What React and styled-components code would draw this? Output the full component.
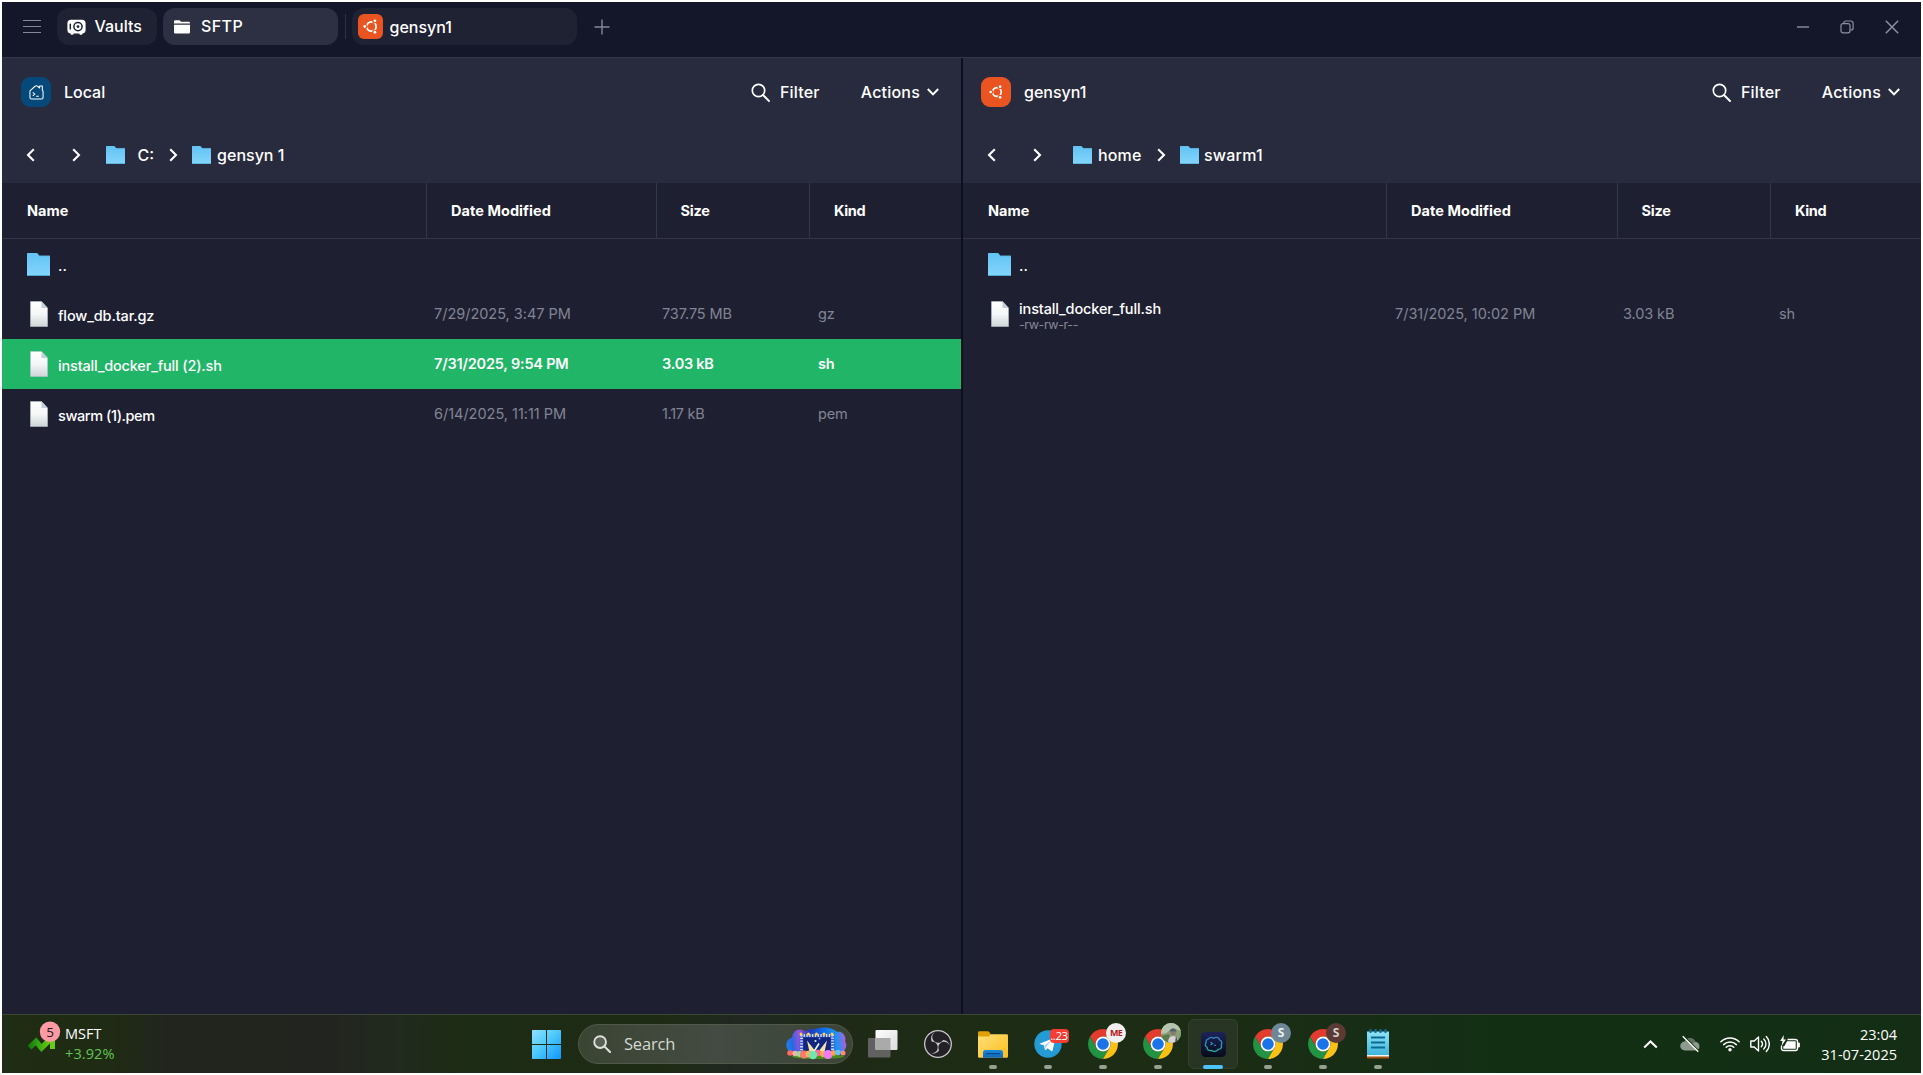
import React from "react";
import styled, { createGlobalStyle } from "styled-components";
import { SiObsstudio } from "react-icons/si";

const GlobalStyle = createGlobalStyle`
  *, *::before, *::after { box-sizing: border-box; }
  body { margin: 0; background: #fff; overflow: hidden; }
  svg { display: block; flex: none; }
`;

/* ---------- shell ---------- */

const Screen = styled.div`
  display: grid;
  grid-template-rows: 56px 956px 59px;
  width: 1919px;
  height: 1071px;
  margin: 2px;
  overflow: hidden;
  color: #fff;
  font-family: "Inter", "Liberation Sans", sans-serif;
  font-size: 16px;
  font-weight: 500;
  white-space: nowrap;
`;

const Label = styled.span`
  font-size: ${(p) => p.$size || 16}px;
  letter-spacing: ${(p) => p.$ls || 0}px;
  line-height: 20px;
  margin-top: ${(p) => p.$down || 0}px;
`;

/* ---------- title bar ---------- */

const TitleBar = styled.header`
  display: flex;
  align-items: flex-start;
  padding: 6px 22px 0 21px;
  background: #141729;
  border-bottom: 1px solid #34374a;
`;

const TitleIcon = styled.div`
  display: flex;
  align-items: center;
  height: 37px;
  margin-left: ${(p) => p.$left || 0}px;
`;

const Tab = styled.div`
  display: flex;
  align-items: center;
  width: ${(p) => p.$width}px;
  height: 37px;
  margin-left: ${(p) => p.$left}px;
  padding-left: ${(p) => p.$pad}px;
  gap: ${(p) => p.$gap}px;
  border-radius: 12px;
  background: ${(p) => (p.$active ? "#2d3042" : "#1f2233")};
`;

const TabRule = styled.div`
  width: 1px;
  height: 25px;
  margin: 6px 0 0 7px;
  background: #2f3245;
`;

const WindowControls = styled.div`
  display: flex;
  align-items: center;
  gap: 31px;
  height: 37px;
  margin-left: auto;
`;

/* ---------- panes ---------- */

const Panes = styled.main`
  display: grid;
  grid-template-columns: 959px 2px 958px;
  background: #1e2032;
`;

const Divider = styled.div`
  background: #0c0f22;
`;

const Pane = styled.section`
  display: flex;
  flex-direction: column;
`;

const PaneHead = styled.div`
  height: 125px;
  background: #282b3d;
`;

const HostRow = styled.div`
  display: flex;
  align-items: center;
  height: 68px;
  padding: 0 ${(p) => p.$right}px 0 ${(p) => p.$left}px;
`;

const HostBadge = styled.div`
  display: flex;
  align-items: center;
  justify-content: center;
  width: ${(p) => p.$w || 30}px;
  height: ${(p) => p.$h || 30}px;
  border-radius: ${(p) => p.$r || 9}px;
  background: ${(p) => p.$color};
`;

const HostName = styled(Label)`
  margin-left: 13px;
`;

const HostActions = styled.div`
  display: flex;
  align-items: center;
  margin-left: auto;
`;

const FilterButton = styled.div`
  display: flex;
  align-items: center;
  gap: 10px;
  margin-right: 41px;
`;

const ActionsButton = styled.div`
  display: flex;
  align-items: center;
  gap: 7px;
`;

const PathRow = styled.div`
  display: flex;
  align-items: center;
  height: 57px;
  padding-left: 24px;
`;

const PathGap = styled.div`
  width: ${(p) => p.$w}px;
  flex: none;
`;

const columns = {
  left: "425px 230px 153px 1fr",
  right: "424px 231px 153px 1fr",
};

const HeaderRow = styled.div`
  display: grid;
  grid-template-columns: ${(p) => columns[p.$side]};
  height: 56px;
  border-bottom: 1px solid #34374a;
`;

const HeaderCell = styled.div`
  display: flex;
  align-items: center;
  padding: 0 0 1px ${(p) => p.$pad || 24}px;
  border-right: ${(p) => (p.$last ? "none" : "1px solid #34374a")};
  font-size: 14.5px;
  font-weight: 700;
  letter-spacing: ${(p) => p.$ls || 0}px;
`;

const FileRow = styled.div`
  display: grid;
  grid-template-columns: 431px 228px 156px 1fr;
  height: 50px;
  background: ${(p) => (p.$selected ? "#21b568" : "transparent")};
`;

const NameCell = styled.div`
  display: flex;
  align-items: center;
  padding-left: 25px;
`;

const IconSlot = styled.div`
  display: flex;
  justify-content: ${(p) => (p.$file ? "center" : "flex-start")};
  width: 23px;
  margin-right: 8px;
`;

const NameStack = styled.div`
  display: flex;
  flex-direction: column;
  padding-top: 3px;
  font-size: 14.5px;
  line-height: ${(p) => (p.$mode ? 17 : 20)}px;
  letter-spacing: ${(p) => p.$ls || 0}px;
`;

const Mode = styled.span`
  font-size: 12.5px;
  font-weight: 400;
  line-height: 15px;
  letter-spacing: -0.4px;
  color: #868896;
`;

const DataCell = styled.div`
  display: flex;
  align-items: center;
  padding-left: 1px;
  padding-bottom: 1px;
  font-size: 14.5px;
  font-weight: ${(p) => (p.$selected ? 600 : 400)};
  letter-spacing: ${(p) => p.$ls || 0}px;
  color: ${(p) => (p.$selected ? "#fff" : "#828492")};
`;

/* ---------- taskbar ---------- */

const Taskbar = styled.footer`
  display: flex;
  border-top: 1px solid #3c4635;
  background: linear-gradient(
    90deg,
    #1f2d13 0px, #1f2b14 110px, #22251d 165px, #22251f 330px,
    #202a1d 400px, #1d2c15 460px, #1e2b14 660px, #202820 740px, #1e2a16 850px,
    #1d2c15 1000px, #1b2c15 1250px, #152e15 1420px, #122f14 1500px, #132e14 1919px
  );
  font-family: "Open Sans", "Noto Sans", sans-serif;
  font-weight: 400;
`;

const StockWidget = styled.div`
  display: flex;
  width: 516.5px;
  padding: 6px 0 0 26px;
`;

const StockIcon = styled.div`
  width: 37px;
  height: 34px;
`;

const StockText = styled.div`
  display: flex;
  flex-direction: column;
  padding-top: 3px;
  font-size: 14.5px;
  line-height: 20px;
`;

const StockChange = styled.span`
  color: #62c552;
  letter-spacing: 0.1px;
`;

const StartCell = styled.div`
  display: flex;
  justify-content: center;
  width: 55px;
  padding-top: 15px;
`;

const SearchBox = styled.div`
  display: flex;
  align-items: center;
  width: 275px;
  height: 40px;
  margin: 9px 0 0 4.5px;
  padding: 0 5px 0 14px;
  border: 1px solid #515a49;
  border-radius: 20px;
  background: linear-gradient(90deg, #3b4533, #434b42 50%, #3b4535);
  color: #d5d9d0;
`;

const SearchText = styled.span`
  margin-left: 13px;
  font-size: 16.5px;
  line-height: 20px;
  letter-spacing: -0.2px;
`;

const SearchArt = styled.div`
  margin-left: auto;
`;

const AppStrip = styled.div`
  display: flex;
  margin-left: 2.5px;
`;

const AppCell = styled.div`
  position: relative;
  display: flex;
  justify-content: center;
  align-items: flex-start;
  width: 55px;
  height: 58px;
  padding-top: ${(p) => p.$top || 14}px;

  &::after {
    content: "";
    position: absolute;
    left: 50%;
    bottom: 4px;
    width: ${(p) => (p.$active ? 20 : 8)}px;
    height: 4px;
    border-radius: 2px;
    transform: translateX(-50%);
    background: ${(p) => (p.$active ? "#4cc2ff" : p.$open ? "#979e92" : "transparent")};
  }
`;

const ActiveTile = styled.div`
  display: flex;
  justify-content: center;
  align-items: center;
  width: 50px;
  height: 50px;
  border: 1px solid #343f2e;
  border-radius: 6px;
  background: #293524;
`;

const Profile = styled.div`
  position: absolute;
  left: 30.5px;
  top: 8px;
  display: flex;
  align-items: center;
  justify-content: center;
  width: 20px;
  height: 20px;
  overflow: hidden;
  border-radius: 50%;
  background: ${(p) => p.$bg};
  color: ${(p) => p.$fg || "#eee"};
  font-size: ${(p) => p.$fs || 12}px;
  letter-spacing: ${(p) => p.$ls || 0}px;
  font-weight: 700;
  line-height: 20px;
`;

const CountBadge = styled.div`
  position: absolute;
  left: 29px;
  top: 14px;
  width: 19px;
  height: 14px;
  border-radius: 4px;
  background: #f23c34;
  color: #fff;
  font-size: 11.5px;
  line-height: 13px;
  letter-spacing: -0.4px;
  text-align: center;
`;

const ObsDisc = styled.div`
  display: flex;
  width: 28px;
  height: 28px;
  border-radius: 50%;
  background: #242126;
  color: #c9c7c9;
`;

const Tray = styled.div`
  display: flex;
  align-items: center;
  margin-left: auto;
  padding-right: 24px;
`;

const Clock = styled.div`
  width: 94px;
  margin-top: 1px;
  text-align: right;
  font-size: 14.5px;
  line-height: 20px;
`;

/* ---------- icons ---------- */

const Burger = () => (
  <svg width="18" height="15" viewBox="0 0 18 15">
    <path d="M0 1.500h18M0 7.500h18M0 13.500h18" stroke="#858899" strokeWidth="1.200" />
  </svg>
);

const VaultIcon = () => (
  <svg width="19" height="16" viewBox="0 0 19 16">
    <path d="M4 0.7h11a3.6 3.6 0 0 1 3.6 3.6v6.6a3.6 3.6 0 0 1-3 3.5l-.6 1.3h-2.2l-.5-1.2H6.7l-.5 1.2H4l-.6-1.3a3.6 3.6 0 0 1-3-3.5V4.3A3.6 3.6 0 0 1 4 .7z" fill="#fff" />
    <circle cx="11" cy="7.6" r="4.1" fill="none" stroke="#1f2233" strokeWidth="1.5" />
    <circle cx="11" cy="7.6" r="1.4" fill="#1f2233" />
    <path d="M3.3 4.7v5.8" stroke="#1f2233" strokeWidth="1.5" />
  </svg>
);

const TabFolder = () => (
  <svg width="16" height="14" viewBox="0 0 16 14">
    <path d="M0 1.3A1.2 1.2 0 0 1 1.2.2h4.3l1.6 1.6h7.7A1.2 1.2 0 0 1 16 3v.6H0z" fill="#fff" />
    <path d="M0 4.7h16v7.6a1.2 1.2 0 0 1-1.2 1.2H1.2A1.2 1.2 0 0 1 0 12.300z" fill="#fff" />
  </svg>
);

const Ubuntu = ({ size = 14 }) => (
  <svg width={size} height={size} viewBox="0 0 16 16">
    <circle cx="9" cy="8" r="5" fill="none" stroke="#fff" strokeWidth="1.900" />
    <circle cx="2.800" cy="8" r="2.300" fill="#e95420" />
    <circle cx="12.200" cy="2.600" r="2.200" fill="#e95420" />
    <circle cx="12.200" cy="13.400" r="2.200" fill="#e95420" />
    <circle cx="1.900" cy="8" r="1.500" fill="#fff" />
    <circle cx="12.700" cy="1.900" r="1.500" fill="#fff" />
    <circle cx="12.700" cy="14.100" r="1.500" fill="#fff" />
  </svg>
);

const PlusIcon = () => (
  <svg width="16" height="16" viewBox="0 0 16 16">
    <path d="M8 0.500v15M0.500 8h15" stroke="#858899" strokeWidth="1.4" />
  </svg>
);

const MinimizeIcon = () => (
  <svg width="12" height="12" viewBox="0 0 12 12">
    <path d="M0 6h12" stroke="#8d90a0" strokeWidth="1.4" />
  </svg>
);

const RestoreIcon = () => (
  <svg width="14" height="14" viewBox="0 0 14 14" fill="none" stroke="#8d90a0" strokeWidth="1.200">
    <rect x="1" y="3.600" width="9" height="9.200" rx="2" />
    <path d="M3.800 3.400V3a2 2 0 0 1 2-2H10.500a2.600 2.600 0 0 1 2.600 2.600V8a2 2 0 0 1-2 2h-.8" />
  </svg>
);

const CloseIcon = () => (
  <svg width="14" height="14" viewBox="0 0 14 14">
    <path d="M0.800 0.800l12.400 12.400M13.200 0.800L0.800 13.200" stroke="#8d90a0" strokeWidth="1.500" />
  </svg>
);

const HomeTerminal = () => (
  <svg width="15" height="15" viewBox="0 0 16 16" fill="none" stroke="#fff" strokeWidth="1.100" strokeLinejoin="round">
    <path d="M1 6.300L6.200 1.600a2.400 2.400 0 0 1 3.300 0l1.800 1.600V1h2.900v4.700l.8.800v6.800a1.700 1.700 0 0 1-1.700 1.700H2.700A1.700 1.700 0 0 1 1 13.300z" />
    <path d="M4 7.800l2.200 1.900L4 11.600M7.600 12h2.800" />
  </svg>
);

const SearchIcon = ({ size = 19, width = 1.700, color = "#fff", fill = "none" }) => (
  <svg width={size} height={size} viewBox="0 0 19 19">
    <circle cx="7.500" cy="7.500" r="6.200" fill={fill} stroke={color} strokeWidth={width} />
    <path d="M12 12l6 6" stroke={color} strokeWidth={width + 0.2} strokeLinecap="round" />
  </svg>
);

const ChevronDown = () => (
  <svg width="12" height="8" viewBox="0 0 12 8">
    <path d="M0.800 1l5.200 5.400L11.200 1" fill="none" stroke="#fff" strokeWidth="2" />
  </svg>
);

const Chevron = ({ left }) => (
  <svg width="9" height="14" viewBox="0 0 9 14">
    <path d={left ? "M7.800 1.200L2 7l5.800 5.800" : "M1.200 1.200L7 7l-5.800 5.800"} fill="none" stroke="#fff" strokeWidth="2.100" />
  </svg>
);

const Folder = ({ w = 23, h = 23 }) => (
  <svg width={w} height={h} viewBox="0 0 23 23" preserveAspectRatio="none">
    <defs>
      <linearGradient id="folderBlue" x1="0" y1="0" x2="0" y2="1">
        <stop offset="0" stopColor="#62c3f4" />
        <stop offset="1" stopColor="#84d5fb" />
      </linearGradient>
    </defs>
    <path d="M0 .6Q0 0 .6 0H9.500q1 0 1.600 1l.8 1.300q.3.500 1 .5H22.400q.6 0 .6.600V22.400q0 .6-.6.600H.6Q0 23 0 22.400z" fill="url(#folderBlue)" />
    <path d="M0 22.500h23" stroke="#4fa9d4" />
    <path d="M12 3.100h11" stroke="#5cb7e4" strokeWidth=".7" />
  </svg>
);

const FileIcon = () => (
  <svg width="18" height="26" viewBox="0 0 18 26">
    <defs>
      <linearGradient id="paper" x1="0" y1="0" x2="0" y2="1">
        <stop offset="0" stopColor="#fff" />
        <stop offset=".5" stopColor="#f4f6f7" />
        <stop offset="1" stopColor="#cfd5d8" />
      </linearGradient>
    </defs>
    <path d="M.5.500H11.500L17.500 7v18.500H.5z" fill="url(#paper)" stroke="#b9c3c9" strokeWidth=".6" />
    <path d="M11.500 .5V7h6z" fill="#c4d0d9" />
  </svg>
);

const StockArrow = () => (
  <svg width="38" height="34" viewBox="0 0 38 34">
    <defs>
      <linearGradient id="stock" x1="0" y1="0" x2="1" y2="0">
        <stop offset="0" stopColor="#157a12" />
        <stop offset=".5" stopColor="#3fae12" />
        <stop offset="1" stopColor="#73d216" />
      </linearGradient>
    </defs>
    <path d="M1.500 26.500L8 20.500l5.500 6.500L24 16.500" fill="none" stroke="url(#stock)" strokeWidth="5.500" />
    <path d="M14 15.500h13V28h-5v-8z" fill="#66cc14" />
    <circle cx="22" cy="10.700" r="10.200" fill="#ff99a4" />
    <text x="22" y="15.500" textAnchor="middle" fontFamily="Open Sans, sans-serif" fontSize="13.500" fill="#1b1b1b">5</text>
  </svg>
);

const WindowsLogo = () => (
  <svg width="29" height="29" viewBox="0 0 29 29">
    <defs>
      <linearGradient id="win" gradientUnits="userSpaceOnUse" x1="0" y1="0" x2="29" y2="29">
        <stop offset="0" stopColor="#8fe3ff" />
        <stop offset=".5" stopColor="#49c6fd" />
        <stop offset="1" stopColor="#0f95ff" />
      </linearGradient>
    </defs>
    <path d="M.5 0H14v14H0V.5zM15 0h13.500l.5.500V14H15zM0 15h14v14H.5L0 28.500zM15 15h14v13.500l-.5.500H15z" fill="url(#win)" />
  </svg>
);

const bubbles = [
  [4, 26, 2.800, "#ff6a5e"], [9, 26.500, 2.800, "#ffb0a0"], [13.500, 27, 3, "#8fe0a0"], [18, 27.500, 4, "#ff7a6a"],
  [23, 27, 3.500, "#ffae62"], [32, 26, 3.200, "#ff6d8e"], [37, 27, 3, "#ffb14a"], [27, 28, 4.200, "#6fe8b0"],
  [42, 27.500, 4.500, "#f279f7"], [47.500, 26, 2.800, "#ffa04a"], [52, 25.500, 2.800, "#5ac8ff"], [57, 26, 2.500, "#ff8a7a"],
];

const ConcertArt = () => (
  <svg width="61" height="34" viewBox="0 0 61 34">
    <defs>
      <linearGradient id="cloud" gradientUnits="userSpaceOnUse" x1="0" y1="22" x2="60" y2="14">
        <stop offset="0" stopColor="#1486f0" />
        <stop offset=".12" stopColor="#2a66e2" />
        <stop offset=".25" stopColor="#a052dc" />
        <stop offset=".42" stopColor="#2338b8" />
        <stop offset=".62" stopColor="#0f66e8" />
        <stop offset=".85" stopColor="#1c94f4" />
        <stop offset="1" stopColor="#b45cdc" />
      </linearGradient>
    </defs>
    <g fill="url(#cloud)">
      <circle cx="8" cy="18" r="7.800" />
      <circle cx="14" cy="10.500" r="8" />
      <ellipse cx="38" cy="8" rx="14" ry="7.500" />
      <ellipse cx="26" cy="9" rx="9" ry="7" />
      <circle cx="52" cy="12" r="7.500" />
      <circle cx="53" cy="18.500" r="7.300" />
      <rect x="8" y="10" width="45" height="16" />
    </g>
    <rect x="17" y="9" width="28" height="17" fill="#13267f" />
    <path d="M15.500 26V8.500h31V26" fill="none" stroke="#3d5bc4" strokeWidth="3.600" />
    <path d="M15.500 26V8.500h31V26" fill="none" stroke="#d3def8" strokeWidth="2.800" strokeDasharray="1.300 1.500" />
    <path d="M21 13.500l9 11.500h-6.500zM41 13.500L32 25h6.500z" fill="#f4e2a6" />
    <path d="M28 24.500l5-8" fill="none" stroke="#f3f7ff" strokeWidth="1.600" />
    <circle cx="29.500" cy="14" r="1.100" fill="#dfe9ff" />
    <circle cx="33.500" cy="11.500" r=".9" fill="#7fb2ff" />
    <g fill="#ffd24a">
      <circle cx="15" cy="7" r="1.500" /><circle cx="22.500" cy="7" r="1.500" /><circle cx="30.500" cy="7" r="1.500" />
      <circle cx="38" cy="7" r="1.500" /><circle cx="46" cy="7" r="1.500" />
    </g>
    <ellipse cx="32" cy="29.500" rx="26" ry="2.600" fill="#4b8a1e" />
    {bubbles.map(([x, y, r, c]) => <circle key={x} cx={x} cy={y} r={r} fill={c} />)}
  </svg>
);

const TaskView = () => (
  <svg width="30" height="28" viewBox="0 0 30 28">
    <defs>
      <linearGradient id="tvw" x1="0" y1="0" x2="1" y2="1">
        <stop offset="0" stopColor="#fff" /><stop offset="1" stopColor="#dcdcdc" />
      </linearGradient>
    </defs>
    <rect x="0" y="8" width="22.500" height="19.500" rx="1" fill="#616161" />
    <rect x="7.500" y="0" width="22" height="20" rx="1" fill="url(#tvw)" />
    <path d="M7.500 8h15v12H8.500l-1-1z" fill="#a9aaa9" />
  </svg>
);

const ExplorerIcon = () => (
  <svg width="30" height="27" viewBox="0 0 30 27">
    <defs>
      <linearGradient id="exf" x1="0" y1="0" x2="1" y2="1">
        <stop offset="0" stopColor="#ffe07a" /><stop offset="1" stopColor="#fcbd1c" />
      </linearGradient>
      <linearGradient id="exb" x1="0" y1="0" x2="0" y2="1">
        <stop offset="0" stopColor="#1c8ade" /><stop offset="1" stopColor="#0f68b8" />
      </linearGradient>
    </defs>
    <path d="M0 1.500Q0 .2 1.300.200h8.500q.8 0 1.400.7L13 3.500v4H0z" fill="#e2a007" />
    <path d="M0 5.500h10.500l2.500-2.200H28.700Q30 3.300 30 4.600V25.500Q30 26.700 28.700 26.700H1.300Q0 26.700 0 25.500z" fill="url(#exf)" />
    <path d="M5 26.700V21.500q0-2.500 2.500-2.500h15q2.500 0 2.500 2.500v5.200z" fill="url(#exb)" />
    <path d="M8.500 22.700h13" stroke="#0b4a86" strokeWidth="1.300" strokeLinecap="round" />
  </svg>
);

const TelegramIcon = () => (
  <svg width="28" height="28" viewBox="0 0 28 28">
    <circle cx="14" cy="14" r="13.700" fill="#259bd6" />
    <path d="M5.500 13.800L20 8.100c.7-.3 1.300.200 1.100 1.200L18.600 20.500c-.2.800-.7 1-1.300.600l-3.700-2.800-1.900 1.800c-.3.200-.6.300-.7-.4l-1.200-4.500-4-1.200c-.7-.2-.7-.5-.3-.2z" fill="#fff" />
    <path d="M10.300 15.300l8.200-5.200-6.300 6.600-.7 2.700z" fill="#b4d4e9" />
  </svg>
);

const ChromeIcon = () => (
  <svg width="30" height="30" viewBox="0 0 48 48">
    <path d="M24 12H44.780A24 24 0 0 0 3.220 12L13.610 30A12 12 0 0 1 24 12z" fill="#e33b2e" />
    <path d="M13.610 30L3.220 12A24 24 0 0 0 24 48L34.390 30A12 12 0 0 1 13.610 30z" fill="#229342" />
    <path d="M34.390 30L24 48A24 24 0 0 0 44.780 12H24A12 12 0 0 1 34.390 30z" fill="#fbc116" />
    <circle cx="24" cy="24" r="12" fill="#fff" />
    <circle cx="24" cy="24" r="9.300" fill="#1a73e8" />
  </svg>
);

const TermiusIcon = () => (
  <svg width="25" height="25" viewBox="0 0 25 25">
    <defs>
      <linearGradient id="tm" x1="0" y1="0" x2="0" y2="1">
        <stop offset="0" stopColor="#1d2358" /><stop offset="1" stopColor="#070a1c" />
      </linearGradient>
      <linearGradient id="tms" x1="0" y1="0" x2="0" y2="1">
        <stop offset="0" stopColor="#2f86c8" /><stop offset="1" stopColor="#25b59a" />
      </linearGradient>
    </defs>
    <rect width="25" height="25" rx="4.500" fill="url(#tm)" />
    <path d="M7.600 6.900C9 4.900 11.200 5.300 12.600 6.200C14.500 4.600 18 5.200 18.500 7.900C21 8.600 21.300 11.300 20.200 12.800C21.300 15.600 19.600 17.600 17.200 17.400C15.700 19.700 12.400 20 10.600 18.500C8 19 5.900 17.800 6.100 15.300C4 14.300 3.900 11.900 5.100 10.700C4.700 8.600 5.800 7.200 7.600 6.900z" fill="none" stroke="url(#tms)" strokeWidth="1.300" />
    <path d="M9.500 10.300l2 1.300-2 1.400M13 13.300h2" fill="none" stroke="#2fa0d0" strokeWidth="1.100" />
  </svg>
);

const NotepadIcon = () => (
  <svg width="22" height="30" viewBox="0 0 22 30">
    <defs>
      <linearGradient id="np" x1="0" y1="0" x2="0" y2="1">
        <stop offset="0" stopColor="#8fe3f5" /><stop offset="1" stopColor="#3fb5dc" />
      </linearGradient>
    </defs>
    <path d="M0 24h22v5.500H0z" fill="#a8500d" />
    <path d="M0 24h22v3.500H0z" fill="#f4f4f4" />
    <path d="M0 2.500h22V26H0z" fill="url(#np)" />
    <path d="M4 8.500h14M4 13.500h14M4 18.500h14" stroke="#0b6a94" strokeWidth="1.800" />
    <path d="M3.500 1.400v1.400M8.500 1.400v1.400M13.500 1.400v1.400M18.500 1.400v1.400" stroke="#0b6a94" strokeWidth="2.600" strokeLinecap="round" />
  </svg>
);

const PhotoAvatar = () => (
  <svg width="20" height="20" viewBox="0 0 20 20">
    <rect width="20" height="20" fill="#87a079" />
    <path d="M0 3l7-3h13v8l-8-3-7 5-5 1z" fill="#b5c5ae" />
    <path d="M0 13l8-2 3 9H0z" fill="#5e7b50" />
    <path d="M7 20q0-7 5-7t5 7z" fill="#d8d2d0" />
    <path d="M15 13l2 7h-3z" fill="#37404a" />
    <circle cx="12" cy="9.500" r="2.900" fill="#8f7a70" />
    <path d="M8.500 8.500q.5-3 3.500-3t3.500 3z" fill="#59626a" />
  </svg>
);

const TrayChevron = () => (
  <svg width="15" height="9" viewBox="0 0 15 9">
    <path d="M1.200 7.500L7.500 1.500l6.300 6" fill="none" stroke="#fff" strokeWidth="2" />
  </svg>
);

const CloudOff = () => (
  <svg width="20" height="18" viewBox="0 0 20 18">
    <path d="M5 15.500a4.500 4.500 0 0 1-.5-9A6 6 0 0 1 15.500 7a4.300 4.300 0 0 1 .5 8.500z" fill="#8f9a8e" />
    <path d="M5 6.300a6 6 0 0 1 10.500.7L11 9z" fill="#5f6e5f" />
    <path d="M3.700 1L19.300 16.500" stroke="#132e14" strokeWidth="1.200" />
    <path d="M2.700 1.200L18.300 16.800" stroke="#fff" strokeWidth="1.300" />
  </svg>
);

const WifiIcon = () => (
  <svg width="20" height="16" viewBox="0 0 20 16" fill="none" stroke="#fff" strokeWidth="1.500" strokeLinecap="round">
    <path d="M.9 5.700a13 13 0 0 1 18.200 0" />
    <path d="M3.600 8.600a9.200 9.200 0 0 1 12.800 0" />
    <path d="M6.200 11.300a5.500 5.500 0 0 1 7.600 0" />
    <circle cx="10" cy="13.800" r="1" fill="#fff" />
  </svg>
);

const VolumeIcon = () => (
  <svg width="20" height="18" viewBox="0 0 20 18" fill="none" stroke="#fff" strokeWidth="1.400" strokeLinecap="round" strokeLinejoin="round">
    <path d="M.8 6h3.400l4.300-4v14l-4.300-4H.8z" />
    <path d="M11.300 6.300a4 4 0 0 1 0 5.400M13.800 3.900a7.200 7.200 0 0 1 0 10.200M16.300 1.500a10.800 10.800 0 0 1 0 15" />
  </svg>
);

const BatteryIcon = () => (
  <svg width="20" height="18" viewBox="0 0 20 18">
    <path d="M7.500 4.500h8a2 2 0 0 1 2 2v7a2 2 0 0 1-2 2h-12a2 2 0 0 1-2-2v-3" fill="none" stroke="#fff" strokeWidth="1.400" />
    <path d="M18 8h1.300v4H18z" fill="#fff" stroke="#fff" />
    <path d="M7 6.300h8.700v7.500H3.300v-2.500h1z" fill="#fff" />
    <path d="M3.800 0L.2 6h2.300l-1 5L6 4.600H3.500z" fill="#fff" />
  </svg>
);

/* ---------- data ---------- */

const localFiles = [
  { name: "..", folder: true },
  { name: "flow_db.tar.gz", ls: -0.13, date: "7/29/2025, 3:47 PM", dls: -0.02, size: "737.75 MB", sls: -0.1, kind: "gz" },
  { name: "install_docker_full (2).sh", ls: -0.17, date: "7/31/2025, 9:54 PM", dls: -0.2, size: "3.03 kB", sls: -0.25, kind: "sh", selected: true },
  { name: "swarm (1).pem", ls: -0.42, date: "6/14/2025, 11:11 PM", dls: -0.02, size: "1.17 kB", sls: -0.3, kind: "pem" },
];

const remoteFiles = [
  { name: "..", folder: true },
  { name: "install_docker_full.sh", ls: -0.12, mode: "-rw-rw-r--", date: "7/31/2025, 10:02 PM", dls: -0.02, size: "3.03 kB", sls: -0.1, kind: "sh" },
];

/* ---------- composed parts ---------- */

const HostTools = () => (
  <HostActions>
    <FilterButton>
      <SearchIcon />
      <Label $ls={0.2}>Filter</Label>
    </FilterButton>
    <ActionsButton>
      <Label $ls={0.2}>Actions</Label>
      <ChevronDown />
    </ActionsButton>
  </HostActions>
);

const FileTable = ({ side, files }) => (
  <>
    <HeaderRow $side={side}>
      <HeaderCell $pad={25}>Name</HeaderCell>
      <HeaderCell $pad={24} $ls={0.05}>Date Modified</HeaderCell>
      <HeaderCell $pad={23.500} $ls={-0.2}>Size</HeaderCell>
      <HeaderCell $pad={24} $ls={-0.3} $last>Kind</HeaderCell>
    </HeaderRow>
    {files.map((f) => (
      <FileRow key={f.name} $selected={f.selected}>
        <NameCell>
          <IconSlot $file={!f.folder}>{f.folder ? <Folder /> : <FileIcon />}</IconSlot>
          <NameStack $mode={f.mode} $ls={f.ls}>
            {f.name}
            {f.mode && <Mode>{f.mode}</Mode>}
          </NameStack>
        </NameCell>
        <DataCell $selected={f.selected} $ls={f.dls}>{f.date}</DataCell>
        <DataCell $selected={f.selected} $ls={f.sls}>{f.size}</DataCell>
        <DataCell $selected={f.selected} $ls={-0.15}>{f.kind}</DataCell>
      </FileRow>
    ))}
  </>
);

export default function App() {
  return (
    <>
      <GlobalStyle />
      <Screen>
        <TitleBar>
          <TitleIcon><Burger /></TitleIcon>
          <Tab $width={100} $left={16} $pad={9.500} $gap={9}>
            <VaultIcon />
            <Label $down={-1}>Vaults</Label>
          </Tab>
          <Tab $width={175} $left={6} $pad={11} $gap={11} $active>
            <TabFolder />
            <Label $ls={0.4} $down={-1}>SFTP</Label>
          </Tab>
          <TabRule />
          <Tab $width={225} $left={6} $pad={6} $gap={6.500}>
            <HostBadge $color="#e95420" $w={25} $h={25} $r={6}><Ubuntu size={15} /></HostBadge>
            <Label $down={1}>gensyn1</Label>
          </Tab>
          <TitleIcon $left={17}><PlusIcon /></TitleIcon>
          <WindowControls>
            <MinimizeIcon />
            <RestoreIcon />
            <CloseIcon />
          </WindowControls>
        </TitleBar>

        <Panes>
          <Pane>
            <PaneHead>
              <HostRow $left={19} $right={22}>
                <HostBadge $color="#04497a"><HomeTerminal /></HostBadge>
                <HostName>Local</HostName>
                <HostTools />
              </HostRow>
              <PathRow>
                <Chevron left />
                <PathGap $w={37} />
                <Chevron />
                <PathGap $w={25} />
                <Folder w={19} h={18} />
                <PathGap $w={12.5} />
                <Label $down={1}>C:</Label>
                <PathGap $w={14.5} />
                <Chevron />
                <PathGap $w={14} />
                <Folder w={19} h={18} />
                <PathGap $w={6.5} />
                <Label $down={1}>gensyn 1</Label>
              </PathRow>
            </PaneHead>
            <FileTable side="left" files={localFiles} />
          </Pane>
          <Divider />
          <Pane>
            <PaneHead>
              <HostRow $left={18} $right={21}>
                <HostBadge $color="#e95420"><Ubuntu /></HostBadge>
                <HostName>gensyn1</HostName>
                <HostTools />
              </HostRow>
              <PathRow>
                <Chevron left />
                <PathGap $w={37} />
                <Chevron />
                <PathGap $w={31} />
                <Folder w={19} h={18} />
                <PathGap $w={6} />
                <Label $ls={0.15} $down={1}>home</Label>
                <PathGap $w={15.500} />
                <Chevron />
                <PathGap $w={13.500} />
                <Folder w={19} h={18} />
                <PathGap $w={5.500} />
                <Label $ls={0.2} $down={1}>swarm1</Label>
              </PathRow>
            </PaneHead>
            <FileTable side="right" files={remoteFiles} />
          </Pane>
        </Panes>

        <Taskbar>
          <StockWidget>
            <StockIcon><StockArrow /></StockIcon>
            <StockText>
              <span>MSFT</span>
              <StockChange>+3.92%</StockChange>
            </StockText>
          </StockWidget>
          <StartCell><WindowsLogo /></StartCell>
          <SearchBox>
            <SearchIcon size={18} width={2} color="#dfe1de" fill="#5a6053" />
            <SearchText>Search</SearchText>
            <SearchArt><ConcertArt /></SearchArt>
          </SearchBox>
          <AppStrip>
            <AppCell $top={15}><TaskView /></AppCell>
            <AppCell $top={15}><ObsDisc><SiObsstudio size={28} /></ObsDisc></AppCell>
            <AppCell $top={16} $open><ExplorerIcon /></AppCell>
            <AppCell $top={15} $open>
              <TelegramIcon />
              <CountBadge>..23</CountBadge>
            </AppCell>
            <AppCell $open>
              <ChromeIcon />
              <Profile $bg="#f1efef" $fg="#b3161b" $fs={9} $ls={-0.8}>ME</Profile>
            </AppCell>
            <AppCell $open>
              <ChromeIcon />
              <Profile $bg="#87a079"><PhotoAvatar /></Profile>
            </AppCell>
            <AppCell $top={4} $active>
              <ActiveTile><TermiusIcon /></ActiveTile>
            </AppCell>
            <AppCell $open>
              <ChromeIcon />
              <Profile $bg="#6e8796">S</Profile>
            </AppCell>
            <AppCell $open>
              <ChromeIcon />
              <Profile $bg="#5a3a33" $fg="#d9cfcc">S</Profile>
            </AppCell>
            <AppCell $open><NotepadIcon /></AppCell>
          </AppStrip>
          <Tray>
            <TrayChevron />
            <PathGap $w={22} />
            <CloudOff />
            <PathGap $w={20} />
            <WifiIcon />
            <PathGap $w={10} />
            <VolumeIcon />
            <PathGap $w={10} />
            <BatteryIcon />
            <PathGap $w={3.5} />
            <Clock>
              <div>23:04</div>
              <div>31-07-2025</div>
            </Clock>
          </Tray>
        </Taskbar>
      </Screen>
    </>
  );
}
